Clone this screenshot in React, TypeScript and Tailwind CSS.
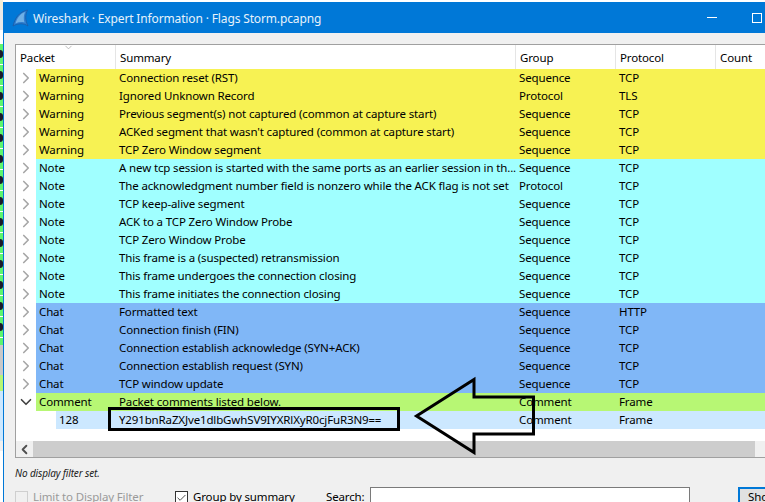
import React from 'react';
import { ChevronDown, ChevronRight, ChevronLeft, Check } from 'lucide-react';

type Row = { severity: string; summary: string; group: string; protocol: string; bg: string };

const WARNING = 'bg-[#f7f253]';
const NOTE = 'bg-[#a0ffff]';
const CHAT = 'bg-[#80b7f7]';

const rows: Row[] = [
  { severity: 'Warning', summary: 'Connection reset (RST)', group: 'Sequence', protocol: 'TCP', bg: WARNING },
  { severity: 'Warning', summary: 'Ignored Unknown Record', group: 'Protocol', protocol: 'TLS', bg: WARNING },
  { severity: 'Warning', summary: 'Previous segment(s) not captured (common at capture start)', group: 'Sequence', protocol: 'TCP', bg: WARNING },
  { severity: 'Warning', summary: "ACKed segment that wasn't captured (common at capture start)", group: 'Sequence', protocol: 'TCP', bg: WARNING },
  { severity: 'Warning', summary: 'TCP Zero Window segment', group: 'Sequence', protocol: 'TCP', bg: WARNING },
  { severity: 'Note', summary: 'A new tcp session is started with the same ports as an earlier session in th...', group: 'Sequence', protocol: 'TCP', bg: NOTE },
  { severity: 'Note', summary: 'The acknowledgment number field is nonzero while the ACK flag is not set', group: 'Protocol', protocol: 'TCP', bg: NOTE },
  { severity: 'Note', summary: 'TCP keep-alive segment', group: 'Sequence', protocol: 'TCP', bg: NOTE },
  { severity: 'Note', summary: 'ACK to a TCP Zero Window Probe', group: 'Sequence', protocol: 'TCP', bg: NOTE },
  { severity: 'Note', summary: 'TCP Zero Window Probe', group: 'Sequence', protocol: 'TCP', bg: NOTE },
  { severity: 'Note', summary: 'This frame is a (suspected) retransmission', group: 'Sequence', protocol: 'TCP', bg: NOTE },
  { severity: 'Note', summary: 'This frame undergoes the connection closing', group: 'Sequence', protocol: 'TCP', bg: NOTE },
  { severity: 'Note', summary: 'This frame initiates the connection closing', group: 'Sequence', protocol: 'TCP', bg: NOTE },
  { severity: 'Chat', summary: 'Formatted text', group: 'Sequence', protocol: 'HTTP', bg: CHAT },
  { severity: 'Chat', summary: 'Connection finish (FIN)', group: 'Sequence', protocol: 'TCP', bg: CHAT },
  { severity: 'Chat', summary: 'Connection establish acknowledge (SYN+ACK)', group: 'Sequence', protocol: 'TCP', bg: CHAT },
  { severity: 'Chat', summary: 'Connection establish request (SYN)', group: 'Sequence', protocol: 'TCP', bg: CHAT },
  { severity: 'Chat', summary: 'TCP window update', group: 'Sequence', protocol: 'TCP', bg: CHAT },
];

const headers = [
  { label: 'Packet', width: 'w-[100px]' },
  { label: 'Summary', width: 'w-[400px]' },
  { label: 'Group', width: 'w-[100px]' },
  { label: 'Protocol', width: 'w-[100px]' },
  { label: 'Count', width: 'flex-1' },
];

const TreeRow = ({ row }: { row: Row }) => (
  <div className="flex h-[18px] items-center">
    <div className="flex w-[20px] justify-center">
      <ChevronRight size={18} strokeWidth={2.2} className="text-[#a6a6a6]" />
    </div>
    <div className={`flex h-full flex-1 items-center ${row.bg}`}>
      <span className="w-[80px] pl-[3px]">{row.severity}</span>
      <span className="w-[400px] pl-[3px] whitespace-nowrap">{row.summary}</span>
      <span className="w-[100px] pl-[3px]">{row.group}</span>
      <span className="pl-[3px]">{row.protocol}</span>
    </div>
  </div>
);

// a sliver of whatever window sits behind the dialog
const BackgroundSliver = () => (
  <div className="flex w-[3px] shrink-0 flex-col bg-white">
    <div className="h-[10px] bg-[#f5efd8]" />
    <div className="h-[20px] bg-[#e8e8e8]" />
    <div className="h-[14px] bg-white" />
    <div className="flex flex-col bg-[#5df56e]">
      {Array.from({ length: 14 }).map((_, i) => (
        <div key={i} className="flex h-[21px] items-center border-b border-white">
          <div className="h-[8px] w-[3px] rounded-r-full bg-[#1a1a2a]" />
        </div>
      ))}
    </div>
    <div className="h-[7px] bg-[#5df56e]" />
    <div className="h-[30px] bg-[#c9c9c9]" />
    <div className="h-[16px] bg-[#b7f774]" />
    <div className="h-[50px] bg-[#cce8ff]" />
    <div className="h-[10px] bg-[#f0f0f0]" />
  </div>
);

const App: React.FC = () => {
  return (
    <div className="relative flex h-[502px] w-[765px] overflow-hidden bg-white font-['Noto_Sans',sans-serif] text-[11.5px] leading-none tracking-[-0.14px] text-black">
      <BackgroundSliver />

      <div className="mt-[2px] flex flex-1 flex-col border-l border-[#0078d7] bg-[#f0f0f0]">
        {/* Title bar */}
        <div className="flex h-[31px] shrink-0 items-center bg-[#0078d7] pl-[8px] text-[#e6f2fb]">
          <svg width="17" height="18" viewBox="0 0 17 18" className="shrink-0">
            <path d="M1 17 C3 9 7 3 15.5 1 C13 6 13 11 16 17 C12 14 6 14 1 17 Z" fill="#2f7fd0" stroke="#1a5aa6" strokeWidth="0.8" />
            <path d="M3.5 14.5 C5 9 8 5 13 3 C11.5 7 11.5 10 12.5 13.5 C9.5 12.8 6.5 13 3.5 14.5 Z" fill="#6fb0e6" />
          </svg>
          <span className="ml-[4px] mt-[2px] whitespace-nowrap text-[12px]">Wireshark · Expert Information · Flags Storm.pcapng</span>
          <div className="ml-auto flex items-center pr-[6px]">
            <div className="h-px w-[10px] bg-white" />
            <div className="ml-[35px] h-[10px] w-[10px] border border-white" />
          </div>
        </div>

        {/* Tree */}
        <div className="ml-[11px] mt-[11px] flex h-[414px] shrink-0 flex-col border-l border-t border-b border-[#a0a0a0] bg-white">
          <div className="relative flex h-[24px] shrink-0 items-center">
            <ChevronDown size={11} strokeWidth={1.5} className="absolute left-[47px] top-[-3px] text-[#a0a0a0]" />
            {headers.map((h) => (
              <div key={h.label} className={`flex h-full items-center border-r border-[#e5e5e5] pl-[4px] pt-[2px] ${h.width}`}>
                {h.label}
              </div>
            ))}
          </div>

          {rows.map((row) => (
            <TreeRow key={row.summary} row={row} />
          ))}

          <div className="flex h-[18px] items-center">
            <div className="flex w-[20px] justify-center">
              <ChevronDown size={18} strokeWidth={2.2} className="text-[#404040]" />
            </div>
            <div className="flex h-full flex-1 items-center bg-[#b7f774]">
              <span className="w-[80px] pl-[3px]">Comment</span>
              <span className="w-[400px] pl-[3px]">Packet comments listed below.</span>
              <span className="w-[100px] pl-[3px]">Comment</span>
              <span className="pl-[3px]">Frame</span>
            </div>
          </div>
          <div className="ml-[40px] flex h-[18px] items-center bg-[#cce8ff]">
            <span className="w-[60px] pl-[3px]">128</span>
            <span className="w-[400px] pl-[3px]">Y291bnRaZXJve1dlbGwhSV9IYXRlXyR0cjFuR3N9==</span>
            <span className="w-[100px] pl-[3px]">Comment</span>
            <span className="pl-[3px]">Frame</span>
          </div>

          <div className="mt-auto flex h-[16px] shrink-0">
            <div className="flex w-[17px] items-center justify-center bg-[#f0f0f0]">
              <ChevronLeft size={15} strokeWidth={3} className="text-[#505050]" />
            </div>
            <div className="w-[722px] bg-[#cdcdcd]" />
            <div className="flex-1 bg-[#f0f0f0]" />
          </div>
        </div>

        {/* Status and filter controls */}
        <div className="ml-[11px] mt-[9px] shrink-0 text-[10px] italic leading-[12px] text-[#222]">No display filter set.</div>
        <div className="ml-[11px] mt-[8px] flex h-[20px] shrink-0 items-start">
          <div className="mt-[4px] h-[14px] w-[13px] shrink-0 border border-[#cfcfcf]" />
          <span className="ml-[5px] mt-[4px] w-[142px] whitespace-nowrap text-[#9a9a9a]">Limit to Display Filter</span>
          <div className="mt-[4px] flex h-[14px] w-[13px] shrink-0 items-center justify-center border border-[#333] bg-white">
            <Check size={12} strokeWidth={1.5} />
          </div>
          <span className="ml-[5px] mt-[4px] w-[133px] whitespace-nowrap">Group by summary</span>
          <span className="mt-[4px] w-[44px]">Search:</span>
          <div className="h-[20px] w-[320px] shrink-0 border border-[#7a7a7a] bg-white" />
          <div className="ml-[48px] flex h-[20px] flex-1 items-center border-2 border-r-0 border-[#0078d7] bg-[#e1e1e1] pl-[8px]">
            Sho
          </div>
        </div>
      </div>

      {/* Hand-drawn annotation over the screenshot */}
      <svg width="765" height="502" viewBox="0 0 765 502" className="pointer-events-none absolute left-0 top-0" fill="none" stroke="#000" strokeWidth="3">
        <rect x="109.5" y="408.5" width="289" height="21" />
        <path d="M416.5 416 L474 379.5 L474 397 L533.5 397 L533.5 434 L474 434 L474 452.5 Z" strokeLinejoin="miter" />
      </svg>
    </div>
  );
};

export default App;
